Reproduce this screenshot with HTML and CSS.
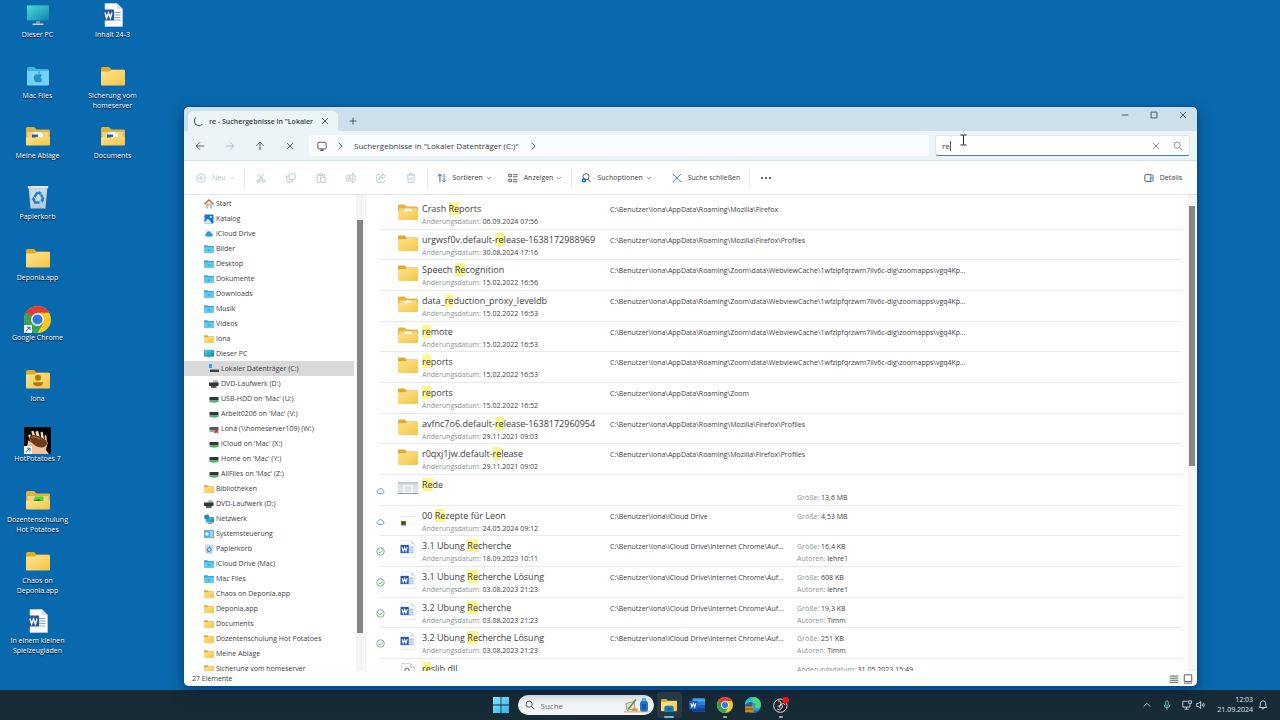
FILE: index.html
```html
<!DOCTYPE html>
<html lang="de">
<head>
  <meta charset="UTF-8">
  <meta name="viewport" content="width=device-width, initial-scale=1.0">
  <title>re - Suchergebnisse in "Lokaler Datenträger (C:)"</title>
  <link rel="stylesheet" href="styles.css">
</head>
<body>

  <!-- Icon sprite -->
  <svg class="sprite" aria-hidden="true">
    <defs>
      <linearGradient id="gFolder" x1="0" y1="0" x2="1" y2="1">
        <stop offset="0" stop-color="#ffe48e"/><stop offset="1" stop-color="#f2c548"/>
      </linearGradient>
      <linearGradient id="gScreen" x1="0" y1="0" x2="1" y2="1">
        <stop offset="0" stop-color="#4fdcd6"/><stop offset="1" stop-color="#0e83b4"/>
      </linearGradient>
      <linearGradient id="gWin" x1="0" y1="0" x2="1" y2="1">
        <stop offset="0" stop-color="#8be6fb"/><stop offset="1" stop-color="#2fb3ee"/>
      </linearGradient>
    </defs>
    <symbol id="folder" viewBox="0 0 24 20">
      <path d="M0 2.5Q0 1 1.500 1H8l2.500 2.500H22.500Q24 3.500 24 5V9H0z" fill="#e0a92e"/>
      <path d="M0 6.500Q0 5.500 1 5.500H8.500L11 4H23q1 0 1 1V18.500Q24 19.500 23 19.500H1Q0 19.500 0 18.500z" fill="url(#gFolder)"/>
    </symbol>
    <symbol id="folder-doc" viewBox="0 0 24 20">
      <path d="M0 2.500Q0 1 1.500 1H8l2.500 2.500H22.500Q24 3.500 24 5V12H0z" fill="#e0b33f"/>
      <path d="M1.500 6H22.500V13H1.500z" fill="#ecd48c"/>
      <path d="M7 6h7l3 2.500v5H7z" fill="#fff"/>
      <path d="M6 8.500h6v4H6z" fill="#34589c"/>
      <path d="M0 11.500H9l2-.8H24V18.500Q24 19.500 23 19.500H1Q0 19.500 0 18.500z" fill="url(#gFolder)"/>
    </symbol>
    <symbol id="folder-open" viewBox="0 0 24 20">
      <path d="M0 2.500Q0 1 1.500 1H8l2.500 2.500H22.500Q24 3.500 24 5V12H0z" fill="#e6b440"/>
      <path d="M1.500 5.500H22.500V13H1.500z" fill="#f0d68c"/>
      <path d="M8 6h7l2 2v4H8z" fill="#fffaf0"/>
      <path d="M0 9.500H9l2-1H24V18.500Q24 19.500 23 19.500H1Q0 19.500 0 18.500z" fill="url(#gFolder)"/>
    </symbol>
    <symbol id="folder-green" viewBox="0 0 24 20">
      <path d="M0 2.500Q0 1 1.500 1H8l2.500 2.500H22.500Q24 3.500 24 5V12H0z" fill="#e0b33f"/>
      <path d="M1.500 6H22.500V13H1.500z" fill="#ecd48c"/>
      <path d="M0 11H9l2-.6H24V18.500Q24 19.500 23 19.500H1Q0 19.500 0 18.500z" fill="url(#gFolder)"/>
      <path d="M9 6.500h8.500v4.500H7.500z" fill="#44dd2c"/><path d="M7 11l6-2 2 2z" fill="#2b7427"/>
    </symbol>
    <symbol id="folder-user" viewBox="0 0 24 20">
      <use href="#folder"/>
      <circle cx="12" cy="8.800" r="3" fill="#ab7a0d"/>
      <path d="M7 13.200h10q0 4-5 4t-5-4z" fill="#ab7a0d"/>
    </symbol>
    <symbol id="folder-blue" viewBox="0 0 24 20">
      <path d="M0 2.500Q0 1 1.500 1H8l2.500 2H22.500Q24 3 24 4.500V9H0z" fill="#34a8d8"/>
      <path d="M0 6H24V18.500Q24 19.500 23 19.500H1Q0 19.500 0 18.500z" fill="#64cbf0"/>
      <path d="M8.500 10h7v5h-7z" fill="#2f98c9" opacity=".5"/>
    </symbol>
    <symbol id="folder-mac" viewBox="0 0 24 20">
      <path d="M1 2.500Q1 1 2.500 1H8l2.500 2H21.500Q23 3 23 4.500V9H1z" fill="#42b2de"/>
      <path d="M1 5H23V18.500Q23 19.500 22 19.500H2Q1 19.500 1 18.500z" fill="#73d3f5"/>
      <path d="M12 8.700c1.200-1 3-.7 3.900.5-1.700 1.100-1.500 3.600.4 4.400-.9 2.400-2 3.400-3.300 2.700-.8-.4-1.200-.3-1.900 0-1.600.7-3.700-2.900-3.300-5.300.3-2.500 2.500-3.400 4.200-2.300zM12 8q0-2.200 2-3 .200 2.300-2 3z" fill="#2492c4"/>
    </symbol>
    <symbol id="pc" viewBox="0 0 24 22">
      <path d="M.5 1h23v16H.5z" fill="#0a6d91"/><path d="M1 1.400h22v15H1z" fill="url(#gScreen)"/>
      <path d="M10 17h4v2.500h-4z" fill="#8194a2"/><path d="M6.500 19.500h11V21h-11z" fill="#c5d1da"/>
    </symbol>
    <symbol id="word" viewBox="0 0 20 24">
      <path d="M2 .5H14L19.500 6v17.500H2z" fill="#fdfdfe" stroke="#ccd3dc" stroke-width=".6"/>
      <path d="M14 .5V6h5.500z" fill="#d5dbe4"/>
      <path d="M11 9.500h6.500M11 12h6.500M11 14.500h6.500M11 17h6.500" stroke="#86a9dc" stroke-width="1.200"/>
      <path d="M0 6.500h11v11H0z" fill="#2857a8"/>
      <path d="M2 9.500l1.600 5.500L5.500 10l1.900 5L9 9.500" fill="none" stroke="#fff" stroke-width="1.400"/>
    </symbol>
    <symbol id="bin" viewBox="0 0 22 24">
      <path d="M1.500 2L20.500 2L18.500 23.500H3.500z" fill="#b9cddb"/><path d="M.8 1h20.400v2.200H.8z" fill="#e1e9ee"/>
      <path d="M3 4h16l-1 9L4 19z" fill="#d1dfe8" opacity=".7"/>
      <path d="M7.500 12l2.500-4 2.500 0M14 9.500l2 4-1.500 2M12.500 17.500H8L6.500 14" fill="none" stroke="#1f83c4" stroke-width="2.400"/>
      <path d="M12 6l3 2-3 2zM17 15l-3.500 0 2 3zM4.500 15l2-3.500 2 3z" fill="#1f83c4"/>
    </symbol>
    <symbol id="chrome" viewBox="0 0 24 24">
      <circle cx="12" cy="12" r="12" fill="#f9c822"/>
      <path d="M12 12L1.610 6A12 12 0 0 0 12 24l5.200-9z" fill="#38a350"/>
      <path d="M1.610 6A12 12 0 0 1 22.390 6H12L6.800 15z" fill="#dc3e32"/>
      <path d="M1.610 6L6.800 15 12 12z" fill="#38a350"/>
      <circle cx="12" cy="12" r="5.700" fill="#fff"/><circle cx="12" cy="12" r="4.500" fill="#3477de"/>
    </symbol>
    <symbol id="shortcut" viewBox="0 0 8 8">
      <path d="M0 0h8v8H0z" fill="#f5f9fc"/><path d="M2 6.200L5.500 2.500M3 2.200h3V5.200" fill="none" stroke="#1d66a8" stroke-width="1"/>
    </symbol>
    <symbol id="potato" viewBox="0 0 26 26">
      <path d="M0 0h26v26H0z" fill="#050505"/>
      <path d="M8 26L3 19 4 13 12 17l6 1 3-4 2 1-2 7 3 4z" fill="#f1c398"/>
      <path d="M7 4l2-.5 3 7-3 1zM11 4.500l2.500-1 2 7-3 .5zM16 5l2-.5 1.500 8-3-1zM20 8l1.500 0 .5 7-2-1zM4 8l2-1 2 5-2 2z" fill="#f7d7b4"/>
      <path d="M5 11q1-4 6-3t9 4 1 6-8 1-8-8z" fill="#6b3c1c"/><path d="M7 10q5-1 9 2" stroke="#a76c3e" fill="none"/>
    </symbol>
    <symbol id="home" viewBox="0 0 10 10">
      <path d="M1.700 4.500h6.600V9.500H6V6.500H4.200v3H1.700z" fill="#b9c3c9"/>
      <path d="M.5 5.300L5 1l4.500 4.300" fill="none" stroke="#cf6a38" stroke-width="1.500"/>
    </symbol>
    <symbol id="gallery" viewBox="0 0 10 10">
      <path d="M.5.5h9v9h-9z" fill="#1975cf"/><path d="M.5 8.500L4 4.500l4 5H.5z" fill="#d8efff"/><circle cx="6.800" cy="3" r="1" fill="#fff"/>
    </symbol>
    <symbol id="icloud" viewBox="0 0 10 10">
      <path d="M.5.5h9v9h-9z" fill="#edf5fa"/><path d="M2.500 7.500a1.700 1.700 0 0 1 0-3.200A2.300 2.300 0 0 1 7 4a1.800 1.800 0 0 1 .5 3.500z" fill="#2e98e4"/>
    </symbol>
    <symbol id="drive" viewBox="0 0 10 10">
      <path d="M0 0h3v4H0z" fill="#35a3e2"/><path d="M1 5h9v3H1z" fill="#3a424a"/><path d="M1 5h9v1H1z" fill="#8b969e"/>
    </symbol>
    <symbol id="dvd" viewBox="0 0 10 10">
      <circle cx="6.500" cy="3.500" r="2.800" fill="#b5bec3"/><path d="M0 3.500h9.500v3.500H0z" fill="#30353a"/><path d="M2 7h5.500v2H2z" fill="#555d63"/>
    </symbol>
    <symbol id="netdrive" viewBox="0 0 10 10">
      <path d="M.5 3h9v3.500h-9z" fill="#30373b"/><path d="M.5 6.500h9V8.200h-9z" fill="#46b36a"/><path d="M3 8.200h4V9.200H3z" fill="#88d09d"/>
    </symbol>
    <symbol id="netoff" viewBox="0 0 10 10">
      <path d="M.5 3h9v3.500h-9z" fill="#555d63"/><path d="M.5 6.500h9V8.200h-9z" fill="#99a1a6"/><path d="M5.500 5.500l3.500 3.500M9 5.500L5.500 9" stroke="#d23a31" stroke-width="1.400"/>
    </symbol>
    <symbol id="network" viewBox="0 0 10 10">
      <path d="M2 3h8v5.500H2z" fill="url(#gScreen)"/><circle cx="2.800" cy="3" r="2.600" fill="#2389b8"/><path d="M4 9h4v1H4z" fill="#788b98"/>
    </symbol>
    <symbol id="control" viewBox="0 0 10 10">
      <path d="M0 1h10v8H0z" fill="#5cb1e2"/><circle cx="3" cy="5" r="1.800" fill="#e6f6ff"/><path d="M6 3h3M6 5h3M6 7h3" stroke="#dff2fd"/>
    </symbol>

    <symbol id="i-left" viewBox="0 0 12 12"><path d="M11 6H1.500M6 1.500L1.500 6 6 10.500"/></symbol>
    <symbol id="i-right" viewBox="0 0 12 12"><path d="M1 6h9.500M6 1.500L10.500 6 6 10.500"/></symbol>
    <symbol id="i-up" viewBox="0 0 12 12"><path d="M6 11V1.500M1.500 6L6 1.500 10.500 6"/></symbol>
    <symbol id="i-x" viewBox="0 0 12 12"><path d="M2.500 2.500l7 7M9.500 2.500l-7 7"/></symbol>
    <symbol id="i-bigx" viewBox="0 0 12 12"><path d="M1 1l10 10M11 1L1 11"/></symbol>
    <symbol id="i-plus" viewBox="0 0 12 12"><path d="M6 2v8M2 6h8"/></symbol>
    <symbol id="i-min" viewBox="0 0 12 12"><path d="M2 6h8"/></symbol>
    <symbol id="i-max" viewBox="0 0 12 12"><path d="M2.500 2.500h7v7h-7z"/></symbol>
    <symbol id="i-chev" viewBox="0 0 12 12"><path d="M4.500 2L8.500 6l-4 4"/></symbol>
    <symbol id="i-down" viewBox="0 0 12 12"><path d="M2 4l4 4 4-4"/></symbol>
    <symbol id="i-caret" viewBox="0 0 12 12"><path d="M2 8L6 4l4 4"/></symbol>
    <symbol id="i-monitor" viewBox="0 0 12 12"><path d="M2 1.500h8q1 0 1 1v6q0 1-1 1H2q-1 0-1-1v-6q0-1 1-1zM4 11.500h4M5 9.500v2M7 9.500v2"/></symbol>
    <symbol id="i-search" viewBox="0 0 12 12"><circle cx="5" cy="5" r="3.700"/><path d="M7.700 7.700L11.200 11.200"/></symbol>
    <symbol id="i-new" viewBox="0 0 12 12"><circle cx="6" cy="6" r="5"/><path d="M6 3.500v5M3.500 6h5"/></symbol>
    <symbol id="i-cut" viewBox="0 0 12 12"><path d="M2.500.8L8 8.500M9.500.8L4 8.500"/><circle cx="3" cy="9.700" r="1.700"/><circle cx="9" cy="9.700" r="1.700"/></symbol>
    <symbol id="i-copy" viewBox="0 0 12 12"><path d="M5 1h5q1 0 1 1v5q0 1-1 1H5Q4 8 4 7V2q0-1 1-1zM4 3.500H2q-1 0-1 1V10q0 1 1 1h4q1.500 0 1.500-1.500V8"/></symbol>
    <symbol id="i-paste" viewBox="0 0 12 12"><path d="M4 2H1.500v9.500H5M8 2h2v2.500M4 1h4v2H4zM5.500 5H11v6.500H5.500z"/></symbol>
    <symbol id="i-rename" viewBox="0 0 12 12"><path d="M7 2.500H2q-1 0-1 1v5q0 1 1 1h5M9.500 2.500H10q1 0 1 1v5q0 1-1 1h-.5M8.200.8v10.400M7 .8h2.500M7 11.200h2.500M2.700 8L4.500 4l1.700 4M3.300 6.800h2.300"/></symbol>
    <symbol id="i-share" viewBox="0 0 12 12"><path d="M5 2H2Q1 2 1 3v7q0 1 1 1h7q1 0 1-1V8.500M8 1l3.200 3L8 7V5.200Q5 5 3.500 8 3.500 3.500 8 2.800z"/></symbol>
    <symbol id="i-trash" viewBox="0 0 12 12"><path d="M1 2.500h10M4.500 2.500V1h3v1.500M2 2.500l.7 9h6.600l.7-9M4.800 5v4M7.200 5v4"/></symbol>
    <symbol id="i-sort" viewBox="0 0 12 12"><path d="M3.500 11V1.500M1 4l2.500-2.500L6 4"/><path class="blue" d="M8.500 1v9.500M6 8l2.500 2.500L11 8"/></symbol>
    <symbol id="i-view" viewBox="0 0 12 12"><path d="M1 1.500h3v3H1zM1 7.500h3v3H1zM6 2h5.500M6 4.500h5.500M6 8h5.500M6 10.500h5.500"/></symbol>
    <symbol id="i-opt" viewBox="0 0 12 12"><circle cx="6" cy="4.500" r="3.700"/><path d="M8.500 7.500l3 3.500"/><circle cx="3.500" cy="8.700" r="2.700" fill="#1767ac" stroke="none"/><circle cx="3.500" cy="8.700" r=".9" fill="#fff" stroke="none"/></symbol>
    <symbol id="i-details" viewBox="0 0 12 12"><path d="M8 2H2Q1 2 1 3v6q0 1 1 1h6"/><path class="blue" d="M8 2h2q1 0 1 1v6q0 1-1 1H8zM9.500 4.500v3"/></symbol>
    <symbol id="i-cloud" viewBox="0 0 12 12"><path d="M3.300 10a2.300 2.300 0 0 1-.2-4.500 3 3 0 0 1 5.800 0A2.300 2.300 0 0 1 8.700 10z"/></symbol>
    <symbol id="i-check" viewBox="0 0 12 12"><circle cx="6" cy="6" r="5"/><path d="M3.500 6.200l1.800 1.800L8.600 4.500"/></symbol>
    <symbol id="i-list" viewBox="0 0 12 12"><path d="M1 2.500h10M1 5h10M1 7.500h10M1 10h10"/></symbol>
    <symbol id="i-tiles" viewBox="0 0 12 12"><path d="M1.500 1h9v8h-9zM1 11h10"/></symbol>
    <symbol id="i-mic" viewBox="0 0 12 12"><path d="M4.500 2.500q0-1.500 1.500-1.500t1.500 1.500v3.500q0 1.500-1.500 1.500T4.500 6zM2.500 5.500q0 3.800 3.500 3.800t3.500-3.800M6 9.300v2.500"/></symbol>
    <symbol id="i-net" viewBox="0 0 12 12"><path d="M7 1.500H1v7h8.500V6M3 11h5M5.300 8.500V11M8 1v3h3.500V1zM9.700 4v2"/></symbol>
    <symbol id="i-sound" viewBox="0 0 12 12"><path d="M.8 4.200h2L5.500 1.800v8.400L2.800 7.800h-2zM7.300 4.500q1 1.500 0 3M8.900 3.200q2 2.800 0 5.600"/></symbol>
    <symbol id="i-bell" viewBox="0 0 12 12"><path d="M1.500 9h9L9.300 7V4.500Q9.300 1 6 1T2.700 4.500V7zM4.700 9.300q0 1.500 1.300 1.500t1.300-1.500"/></symbol>
    <symbol id="i-beam" viewBox="0 0 8 12"><path d="M1 1h2.500l.5.500.5-.5H7M4 1.500v9M1 11h2.500l.5-.5.5.5H7"/></symbol>
  </svg>

  <main class="desktop">
    <div class="desktop-icons">
      <a href="#" class="shortcut"><svg><use href="#pc"/></svg><span>Dieser PC</span></a>
      <a href="#" class="shortcut"><svg><use href="#folder-mac"/></svg><span>Mac Files</span></a>
      <a href="#" class="shortcut"><svg><use href="#folder-doc"/></svg><span>Meine Ablage</span></a>
      <a href="#" class="shortcut"><svg><use href="#bin"/></svg><span>Papierkorb</span></a>
      <a href="#" class="shortcut"><svg><use href="#folder"/></svg><span>Deponia.app</span></a>
      <a href="#" class="shortcut large"><svg><use href="#chrome"/></svg><svg class="arrow"><use href="#shortcut"/></svg><span>Google Chrome</span></a>
      <a href="#" class="shortcut"><svg><use href="#folder-user"/></svg><span>Iona</span></a>
      <a href="#" class="shortcut large"><svg><use href="#potato"/></svg><svg class="arrow"><use href="#shortcut"/></svg><span>HotPotatoes 7</span></a>
      <a href="#" class="shortcut"><svg><use href="#folder-green"/></svg><span>Dozentenschulung<br>Hot Potatoes</span></a>
      <a href="#" class="shortcut"><svg><use href="#folder"/></svg><span>Chaos on<br>Deponia.app</span></a>
      <a href="#" class="shortcut"><svg><use href="#word"/></svg><span>In einem kleinen<br>Spielzeugladen</span></a>
      <a href="#" class="shortcut"><svg><use href="#word"/></svg><span>Inhalt 24-3</span></a>
      <a href="#" class="shortcut"><svg><use href="#folder"/></svg><span>Sicherung vom<br>homeserver</span></a>
      <a href="#" class="shortcut"><svg><use href="#folder-doc"/></svg><span>Documents</span></a>
    </div>

    <section class="window">
      <header class="titlebar">
        <div class="tab">
          <span class="spinner"></span>
          <span class="tab-title">re - Suchergebnisse in "Lokaler</span>
          <button class="icon-btn" aria-label="Tab schließen"><svg class="line"><use href="#i-x"/></svg></button>
        </div>
        <button class="icon-btn new-tab" aria-label="Neuer Tab"><svg class="line"><use href="#i-plus"/></svg></button>
        <div class="window-controls">
          <button class="icon-btn" aria-label="Minimieren"><svg class="line"><use href="#i-min"/></svg></button>
          <button class="icon-btn" aria-label="Maximieren"><svg class="line"><use href="#i-max"/></svg></button>
          <button class="icon-btn" aria-label="Schließen"><svg class="line"><use href="#i-x"/></svg></button>
        </div>
      </header>

      <nav class="address-row">
        <button class="icon-btn" aria-label="Zurück"><svg class="line"><use href="#i-left"/></svg></button>
        <button class="icon-btn" aria-label="Vorwärts" disabled><svg class="line"><use href="#i-right"/></svg></button>
        <button class="icon-btn" aria-label="Nach oben"><svg class="line"><use href="#i-up"/></svg></button>
        <button class="icon-btn" aria-label="Abbrechen"><svg class="line"><use href="#i-x"/></svg></button>
        <div class="breadcrumb">
          <svg class="line"><use href="#i-monitor"/></svg>
          <svg class="line chev"><use href="#i-chev"/></svg>
          <a href="#">Suchergebnisse in "Lokaler Datenträger (C:)"</a>
          <svg class="line chev"><use href="#i-chev"/></svg>
        </div>
        <div class="search">
          <input type="text" value="re" aria-label="Suchen">
          <span class="text-caret"></span>
          <svg class="line pointer"><use href="#i-beam"/></svg>
          <button class="icon-btn" aria-label="Eingabe löschen"><svg class="line"><use href="#i-x"/></svg></button>
          <button class="icon-btn" aria-label="Suche starten"><svg class="line"><use href="#i-search"/></svg></button>
        </div>
      </nav>

      <div class="toolbar">
        <button class="tool" disabled><svg class="line"><use href="#i-new"/></svg>Neu<svg class="line small"><use href="#i-down"/></svg></button>
        <span class="divider"></span>
        <button class="icon-btn" aria-label="Ausschneiden" disabled><svg class="line"><use href="#i-cut"/></svg></button>
        <button class="icon-btn" aria-label="Kopieren" disabled><svg class="line"><use href="#i-copy"/></svg></button>
        <button class="icon-btn" aria-label="Einfügen" disabled><svg class="line"><use href="#i-paste"/></svg></button>
        <button class="icon-btn" aria-label="Umbenennen" disabled><svg class="line"><use href="#i-rename"/></svg></button>
        <button class="icon-btn" aria-label="Freigeben" disabled><svg class="line"><use href="#i-share"/></svg></button>
        <button class="icon-btn" aria-label="Löschen" disabled><svg class="line"><use href="#i-trash"/></svg></button>
        <span class="divider"></span>
        <button class="tool"><svg class="line"><use href="#i-sort"/></svg>Sortieren<svg class="line small"><use href="#i-down"/></svg></button>
        <button class="tool"><svg class="line"><use href="#i-view"/></svg>Anzeigen<svg class="line small"><use href="#i-down"/></svg></button>
        <span class="divider"></span>
        <button class="tool"><svg class="line"><use href="#i-opt"/></svg>Suchoptionen<svg class="line small"><use href="#i-down"/></svg></button>
        <button class="tool close-search"><svg class="line"><use href="#i-bigx"/></svg>Suche schließen</button>
        <span class="divider"></span>
        <button class="icon-btn more" aria-label="Mehr anzeigen"><i></i><i></i><i></i></button>
        <button class="tool details"><svg class="line"><use href="#i-details"/></svg>Details</button>
      </div>

      <div class="content">
        <nav class="sidebar">
          <ul class="tree">
            <li><a href="#"><svg><use href="#home"/></svg>Start</a></li>
            <li><a href="#"><svg><use href="#gallery"/></svg>Katalog</a></li>
            <li><a href="#"><svg><use href="#icloud"/></svg>iCloud Drive</a></li>
            <li><a href="#"><svg><use href="#folder-blue"/></svg>Bilder</a></li>
            <li><a href="#"><svg><use href="#folder-blue"/></svg>Desktop</a></li>
            <li><a href="#"><svg><use href="#folder-blue"/></svg>Dokumente</a></li>
            <li><a href="#"><svg><use href="#folder-blue"/></svg>Downloads</a></li>
            <li><a href="#"><svg><use href="#folder-blue"/></svg>Musik</a></li>
            <li><a href="#"><svg><use href="#folder-blue"/></svg>Videos</a></li>
            <li><a href="#"><svg><use href="#folder"/></svg>Iona</a></li>
            <li><a href="#"><svg><use href="#pc"/></svg>Dieser PC</a></li>
            <li class="sub selected"><a href="#"><svg><use href="#drive"/></svg>Lokaler Datenträger (C:)</a></li>
            <li class="sub"><a href="#"><svg><use href="#dvd"/></svg>DVD-Laufwerk (D:)</a></li>
            <li class="sub"><a href="#"><svg><use href="#netdrive"/></svg>USB-HDD on 'Mac' (U:)</a></li>
            <li class="sub"><a href="#"><svg><use href="#netdrive"/></svg>Arbeit0206 on 'Mac' (V:)</a></li>
            <li class="sub"><a href="#"><svg><use href="#netoff"/></svg>Lona (\\homeserver109) (W:)</a></li>
            <li class="sub"><a href="#"><svg><use href="#netdrive"/></svg>iCloud on 'Mac' (X:)</a></li>
            <li class="sub"><a href="#"><svg><use href="#netdrive"/></svg>Home on 'Mac' (Y:)</a></li>
            <li class="sub"><a href="#"><svg><use href="#netdrive"/></svg>AllFiles on 'Mac' (Z:)</a></li>
            <li><a href="#"><svg><use href="#folder"/></svg>Bibliotheken</a></li>
            <li><a href="#"><svg><use href="#dvd"/></svg>DVD-Laufwerk (D:)</a></li>
            <li><a href="#"><svg><use href="#network"/></svg>Netzwerk</a></li>
            <li><a href="#"><svg><use href="#control"/></svg>Systemsteuerung</a></li>
            <li><a href="#"><svg><use href="#bin"/></svg>Papierkorb</a></li>
            <li><a href="#"><svg><use href="#folder-blue"/></svg>iCloud Drive (Mac)</a></li>
            <li><a href="#"><svg><use href="#folder-blue"/></svg>Mac Files</a></li>
            <li><a href="#"><svg><use href="#folder"/></svg>Chaos on Deponia.app</a></li>
            <li><a href="#"><svg><use href="#folder"/></svg>Deponia.app</a></li>
            <li><a href="#"><svg><use href="#folder"/></svg>Documents</a></li>
            <li><a href="#"><svg><use href="#folder"/></svg>Dozentenschulung Hot Potatoes</a></li>
            <li><a href="#"><svg><use href="#folder"/></svg>Meine Ablage</a></li>
            <li><a href="#"><svg><use href="#folder"/></svg>Sicherung vom homeserver</a></li>
          </ul>
          <div class="scrollbar"><div class="thumb"></div></div>
        </nav>

        <ul class="results">
          <li class="result">
            <svg class="file-icon"><use href="#folder-open"/></svg>
            <div class="name"><h3>Crash <mark>Re</mark>ports</h3><p><span>Änderungsdatum:</span> 06.09.2024 07:56</p></div>
            <p class="path wide">C:\Benutzer\Iona\AppData\Roaming\Mozilla\Firefox</p>
          </li>
          <li class="result">
            <svg class="file-icon"><use href="#folder"/></svg>
            <div class="name"><h3>urgwsf0v.default-<mark>re</mark>lease-1638172988969</h3><p><span>Änderungsdatum:</span> 30.08.2024 17:16</p></div>
            <p class="path wide">C:\Benutzer\Iona\AppData\Roaming\Mozilla\Firefox\Profiles</p>
          </li>
          <li class="result">
            <svg class="file-icon"><use href="#folder"/></svg>
            <div class="name"><h3>Speech <mark>Re</mark>cognition</h3><p><span>Änderungsdatum:</span> 15.02.2022 16:56</p></div>
            <p class="path wide">C:\Benutzer\Iona\AppData\Roaming\Zoom\data\WebviewCache\1wfzlpfqrzwm7ilv6c-dig\zoomapps\vgq4Kp...</p>
          </li>
          <li class="result">
            <svg class="file-icon"><use href="#folder-open"/></svg>
            <div class="name"><h3>data_<mark>re</mark>duction_proxy_leveldb</h3><p><span>Änderungsdatum:</span> 15.02.2022 16:53</p></div>
            <p class="path wide">C:\Benutzer\Iona\AppData\Roaming\Zoom\data\WebviewCache\1wfzlpfqrzwm7ilv6c-dig\zoomapps\vgq4Kp...</p>
          </li>
          <li class="result">
            <svg class="file-icon"><use href="#folder-open"/></svg>
            <div class="name"><h3><mark>re</mark>mote</h3><p><span>Änderungsdatum:</span> 15.02.2022 16:53</p></div>
            <p class="path wide">C:\Benutzer\Iona\AppData\Roaming\Zoom\data\WebviewCache\1wfzlpfqrzwm7ilv6c-dig\zoomapps\vgq4Kp...</p>
          </li>
          <li class="result">
            <svg class="file-icon"><use href="#folder"/></svg>
            <div class="name"><h3><mark>re</mark>ports</h3><p><span>Änderungsdatum:</span> 15.02.2022 16:53</p></div>
            <p class="path wide">C:\Benutzer\Iona\AppData\Roaming\Zoom\data\WebviewCache\1wfzlpfqrzwm7ilv6c-dig\zoomapps\vgq4Kp...</p>
          </li>
          <li class="result">
            <svg class="file-icon"><use href="#folder"/></svg>
            <div class="name"><h3><mark>re</mark>ports</h3><p><span>Änderungsdatum:</span> 15.02.2022 16:52</p></div>
            <p class="path wide">C:\Benutzer\Iona\AppData\Roaming\Zoom</p>
          </li>
          <li class="result">
            <svg class="file-icon"><use href="#folder"/></svg>
            <div class="name"><h3>avfnc7o6.default-<mark>re</mark>lease-1638172960954</h3><p><span>Änderungsdatum:</span> 29.11.2021 09:03</p></div>
            <p class="path wide">C:\Benutzer\Iona\AppData\Roaming\Mozilla\Firefox\Profiles</p>
          </li>
          <li class="result">
            <svg class="file-icon"><use href="#folder"/></svg>
            <div class="name"><h3>r0qxj1jw.default-<mark>re</mark>lease</h3><p><span>Änderungsdatum:</span> 29.11.2021 09:02</p></div>
            <p class="path wide">C:\Benutzer\Iona\AppData\Roaming\Mozilla\Firefox\Profiles</p>
          </li>
          <li class="result">
            <svg class="line sync"><use href="#i-cloud"/></svg>
            <svg class="file-icon" viewBox="0 0 20 12"><path d="M0 0h20v12H0z" fill="#dde2e4"/><path d="M0 0h20v2H0z" fill="#c2cbd0"/><path d="M5 3.500h10V11H5z" fill="#f8fafa"/><path d="M6.500 5h7M6.500 7h7M6.500 9h7" stroke="#b0b7ba" stroke-width=".7"/><path d="M0 11.500h20" stroke="#8ba0ae"/></svg>
            <div class="name"><h3><mark>Re</mark>de</h3></div>
            <div class="info"><p>&nbsp;</p><p><span>Größe:</span> 13,6 MB</p></div>
          </li>
          <li class="result">
            <svg class="line sync"><use href="#i-cloud"/></svg>
            <svg class="file-icon" viewBox="0 0 20 16"><path d="M2 0h15v15H2z" fill="#fcfcfb"/><path d="M2 5.500h15" stroke="#dedede" stroke-width=".8"/><path d="M3 10h5v4.500H3z" fill="#697143"/><path d="M4 11h3v2H4z" fill="#3d4821"/></svg>
            <div class="name"><h3>00 <mark>Re</mark>zepte für Leon</h3><p><span>Änderungsdatum:</span> 24.05.2024 09:12</p></div>
            <p class="path">C:\Benutzer\Iona\iCloud Drive</p>
            <div class="info"><p><span>Größe:</span> 4,53 MB</p></div>
          </li>
          <li class="result">
            <svg class="line sync done"><use href="#i-check"/></svg>
            <svg class="file-icon"><use href="#word"/></svg>
            <div class="name"><h3>3.1 Ubung <mark>Re</mark>cherche</h3><p><span>Änderungsdatum:</span> 18.09.2023 10:11</p></div>
            <p class="path">C:\Benutzer\Iona\iCloud Drive\Internet Chrome\Auf...</p>
            <div class="info"><p><span>Größe:</span> 16,4 KB</p><p><span>Autoren:</span> lehre1</p></div>
          </li>
          <li class="result">
            <svg class="line sync done"><use href="#i-check"/></svg>
            <svg class="file-icon"><use href="#word"/></svg>
            <div class="name"><h3>3.1 Ubung <mark>Re</mark>cherche Lösung</h3><p><span>Änderungsdatum:</span> 03.08.2023 21:23</p></div>
            <p class="path">C:\Benutzer\Iona\iCloud Drive\Internet Chrome\Auf...</p>
            <div class="info"><p><span>Größe:</span> 608 KB</p><p><span>Autoren:</span> lehre1</p></div>
          </li>
          <li class="result">
            <svg class="line sync done"><use href="#i-check"/></svg>
            <svg class="file-icon"><use href="#word"/></svg>
            <div class="name"><h3>3.2 Ubung <mark>Re</mark>cherche</h3><p><span>Änderungsdatum:</span> 03.08.2023 21:23</p></div>
            <p class="path">C:\Benutzer\Iona\iCloud Drive\Internet Chrome\Auf...</p>
            <div class="info"><p><span>Größe:</span> 19,3 KB</p><p><span>Autoren:</span> Timm</p></div>
          </li>
          <li class="result">
            <svg class="line sync done"><use href="#i-check"/></svg>
            <svg class="file-icon"><use href="#word"/></svg>
            <div class="name"><h3>3.2 Ubung <mark>Re</mark>cherche Lösung</h3><p><span>Änderungsdatum:</span> 03.08.2023 21:23</p></div>
            <p class="path">C:\Benutzer\Iona\iCloud Drive\Internet Chrome\Auf...</p>
            <div class="info"><p><span>Größe:</span> 251 KB</p><p><span>Autoren:</span> Timm</p></div>
          </li>
          <li class="result">
            <svg class="file-icon" viewBox="0 0 20 20"><path d="M3 .5h9.500L17 5v14.500H3z" fill="#fff" stroke="#cfcfcf"/><path d="M12.500.5V5H17" fill="none" stroke="#bbb"/><circle cx="9" cy="8" r="2.200" fill="none" stroke="#8b9297" stroke-width="1.500"/></svg>
            <div class="name"><h3><mark>re</mark>slib.dll</h3></div>
            <div class="info"><p><span>Änderungsdatum:</span> 31.05.2023 15:49</p></div>
          </li>
        </ul>
        <div class="scrollbar main-scroll"><div class="thumb"></div></div>
      </div>

      <footer class="statusbar">
        <span>27 Elemente</span>
        <button class="icon-btn" aria-label="Listenansicht"><svg class="line"><use href="#i-list"/></svg></button>
        <button class="icon-btn" aria-label="Kachelansicht"><svg class="line"><use href="#i-tiles"/></svg></button>
      </footer>
    </section>
  </main>

  <footer class="taskbar">
    <div class="apps">
      <button class="app start" aria-label="Start"><svg viewBox="0 0 20 20"><path d="M0 0h9.500v9.500H0zM10.500 0H20v9.500h-9.500zM0 10.500h9.500V20H0zM10.500 10.500H20V20h-9.500z" fill="url(#gWin)"/></svg></button>
      <div class="task-search">
        <svg class="line"><use href="#i-search"/></svg>
        <input type="text" placeholder="Suche" aria-label="Suche">
        <svg class="art" viewBox="0 0 26 14"><path d="M0 12.500h26v1.500H0z" fill="#dfbf8f"/><path d="M2 5l8-2 1 7-8 2z" fill="#e9e3d0" stroke="#9aa37a"/><path d="M4 11L12 1" stroke="#5d9a45" stroke-width="1.500"/><path d="M9 10h5v2.500H7z" fill="#d9984f"/><path d="M16 5q0-2 2-3V0h4v2q2 1 2 3v6q0 2-2 2h-4q-2 0-2-2z" fill="#1f78cd"/><path d="M18 0h4v2.500h-4z" fill="#53b8ee"/><path d="M18 5q2 2 4 0v6h-4z" fill="#1656a3"/></svg>
      </div>
      <button class="app active" aria-label="Explorer"><svg viewBox="0 0 24 20"><use href="#folder"/><path d="M5 20v-6q0-3 3-3h8q3 0 3 3v6z" fill="#1a7fc0"/><path d="M8 15h8v2H8z" fill="#0b5e9a"/></svg></button>
      <button class="app" aria-label="Word"><svg viewBox="0 0 22 20"><path d="M5 1h17v18H5z" fill="#2b7cd3"/><path d="M5 1h17v4.500H5z" fill="#41a5ee"/><path d="M5 10h17v4.500H5z" fill="#185abd"/><path d="M5 14.500h17V19H5z" fill="#103f91"/><path d="M0 4.500h12v11.500H0z" fill="#185abd"/><path d="M2.500 7.500l1.600 5.500L6 8l1.900 5 1.600-5.500" fill="none" stroke="#fff" stroke-width="1.400"/></svg></button>
      <button class="app running" aria-label="Chrome"><svg><use href="#chrome"/></svg></button>
      <button class="app" aria-label="Edge"><svg viewBox="0 0 24 24"><circle cx="12" cy="12" r="12" fill="#1f9bd7"/><path d="M0 12A12 12 0 0 1 24 12q0 5-5 5-4 0-4-2 2-2 0-5Q8 4 0 12z" fill="#50d47c"/><path d="M0 12A12 12 0 0 1 12 0q-2 4 0 6Q5 5 0 12z" fill="#2fb4d6"/><path d="M0 12Q6 5 12 9q-4 3-2 8 3 6 11 3A12 12 0 0 1 0 12z" fill="#1868b4"/><path d="M0 14h13v9H0z" fill="#c98727"/><path d="M4 14v-2h5v2M0 18h13" fill="none" stroke="#714511" stroke-width="1.300"/></svg></button>
      <button class="app running" aria-label="OBS"><svg viewBox="0 0 24 24"><circle cx="11" cy="13" r="10" fill="#23252b" stroke="#d6dbe0" stroke-width="1.500"/><path d="M7 6q5-1 5 4t-5 4M18 12q-2-4-6-1t-1 6M6 18q4 3 7-1t-1-6" fill="none" stroke="#d6dbe0" stroke-width="1.500"/><circle cx="19" cy="5" r="5" fill="#f31416"/></svg></button>
    </div>
    <div class="tray">
      <button class="icon-btn" aria-label="Ausgeblendete Symbole"><svg class="line"><use href="#i-caret"/></svg></button>
      <button class="icon-btn mic" aria-label="Mikrofon"><svg class="line"><use href="#i-mic"/></svg></button>
      <button class="tray-group" aria-label="Netzwerk und Ton"><svg class="line"><use href="#i-net"/></svg><svg class="line"><use href="#i-sound"/></svg></button>
      <button class="clock"><time>12:03</time><time>21.09.2024</time></button>
      <button class="icon-btn bell" aria-label="Benachrichtigungen"><svg class="line"><use href="#i-bell"/></svg></button>
    </div>
  </footer>

</body>
</html>
```

FILE: styles.css
```css
* {
  box-sizing: border-box;
}

body {
  margin: 0;
  height: 100vh;
  display: flex;
  flex-direction: column;
  overflow: hidden;
  font-family: "Open Sans", "Noto Sans", sans-serif;
  font-size: 8px;
  color: #3c4043;
}

h3,
p,
ul {
  margin: 0;
  padding: 0;
  font-weight: normal;
  list-style: none;
}

a {
  color: inherit;
  text-decoration: none;
}

button,
input {
  font: inherit;
  color: inherit;
  background: none;
  border: none;
  padding: 0;
  outline: none;
}

svg {
  display: block;
  flex-shrink: 0;
}

.sprite {
  position: absolute;
  width: 0;
  height: 0;
}

.line {
  width: 10px;
  height: 10px;
  fill: none;
  stroke: currentColor;
  stroke-width: 1;
}

.line.small {
  width: 6px;
  height: 6px;
  margin-left: -3px;
}

.blue {
  stroke: #2273b5;
}

.icon-btn {
  display: flex;
  align-items: center;
  justify-content: center;
  width: 30px;
  height: 20px;
}

/* Desktop */
.desktop {
  flex: 1;
  min-height: 0;
  position: relative;
  background: #0869ae;
}

.desktop-icons {
  height: 100%;
  display: grid;
  grid-auto-flow: column;
  grid-template-rows: repeat(11, 1fr);
  grid-auto-columns: 75px;
  padding-bottom: 23px;
}

.shortcut {
  position: relative;
  display: flex;
  flex-direction: column;
  align-items: center;
  padding-top: 3px;
  min-height: 0;
  color: #fff;
  text-align: center;
  font-size: 7px;
  line-height: 10px;
  text-shadow: 0 1px 1px #000;
}

.shortcut svg {
  width: 24px;
  height: 24px;
  margin-bottom: 3px;
}

.shortcut.large svg {
  width: 27px;
  height: 27px;
  margin-bottom: 0;
}

.shortcut.large .arrow {
  position: absolute;
  top: 22px;
  left: 24px;
  width: 8px;
  height: 8px;
}

/* Explorer window */
.window {
  position: absolute;
  top: 107px;
  right: 83px;
  bottom: 4px;
  left: 184px;
  display: flex;
  flex-direction: column;
  overflow: hidden;
  background: #fff;
  border-radius: 5px;
  box-shadow: 0 0 1px 1px #07508a, 0 5px 14px rgba(0, 20, 50, 0.5);
}

.titlebar {
  display: flex;
  height: 24px;
  padding-left: 4px;
  background: #ccdfea;
}

.tab {
  display: flex;
  align-items: center;
  width: 150px;
  height: 20px;
  margin-top: 4px;
  padding-left: 6px;
  background: #ebf4f7;
  border-radius: 5px 5px 0 0;
}

.spinner {
  width: 10px;
  height: 10px;
  border: 1px solid transparent;
  border-bottom-color: #2d4656;
  border-left-color: #2d4656;
  border-radius: 50%;
}

.tab-title {
  width: 105px;
  margin-left: 5px;
  white-space: nowrap;
  font-size: 7px;
  font-weight: 600;
}

.tab .icon-btn {
  width: 22px;
}

.new-tab {
  height: 24px;
  padding-top: 4px;
}

.window-controls {
  display: flex;
  height: 16px;
  margin-left: auto;
}

.window-controls .icon-btn {
  width: 29px;
  height: 16px;
}

.address-row {
  display: flex;
  align-items: center;
  height: 30px;
  padding: 0 7px 0 1px;
  background: #ebf4f7;
  border-bottom: 1px solid #d5e2e7;
}

.address-row :disabled {
  color: #a9b4ba;
}

.breadcrumb {
  flex: 1;
  display: flex;
  align-items: center;
  height: 21px;
  margin-left: 4px;
  padding-left: 8px;
  background: #f8fcfd;
  border-radius: 3px;
}

.breadcrumb a {
  margin: 0 9px;
}

.breadcrumb .chev:nth-child(2) {
  margin-left: 8px;
}

.search {
  position: relative;
  display: flex;
  align-items: center;
  width: 255px;
  height: 21px;
  margin-left: 6px;
  padding-left: 6px;
  background: #fff;
  border: 1px solid #e1e8eb;
  border-bottom: 1px solid #4481a9;
  border-radius: 3px;
}

.search input {
  flex: 1;
  min-width: 0;
}

.search .icon-btn {
  width: 22px;
  color: #757c80;
}

.text-caret {
  position: absolute;
  top: 5px;
  left: 14px;
  width: 1px;
  height: 10px;
  background: #555;
}

.search .pointer {
  position: absolute;
  top: -2px;
  left: 23px;
  width: 9px;
  height: 12px;
  color: #222;
}

/* Command bar */
.toolbar {
  display: flex;
  align-items: center;
  height: 34px;
  padding: 0 7px 0 4px;
  border-bottom: 1px solid #e0e7ea;
  font-size: 7px;
}

.tool {
  display: flex;
  align-items: center;
  gap: 6px;
  height: 20px;
  padding: 0 8px;
}

.toolbar :disabled {
  color: #b1bec5;
}

.divider {
  width: 1px;
  height: 20px;
  margin: 0 1px;
  background: #e8edef;
}

.close-search {
  margin-left: 4px;
}

.close-search svg {
  color: #2273b5;
}

.more {
  gap: 2px;
}

.more i {
  width: 2px;
  height: 2px;
  background: #333;
  border-radius: 50%;
}

.details {
  margin-left: auto;
}

/* Folder tree */
.content {
  flex: 1;
  min-height: 0;
  display: flex;
  overflow: hidden;
}

.sidebar {
  width: 182px;
  display: flex;
  border-right: 1px solid #f0f3f4;
}

.tree {
  flex: 1;
  padding-top: 1px;
  font-size: 7px;
}

.tree a {
  display: flex;
  align-items: center;
  gap: 2px;
  height: 15px;
  padding-left: 20px;
  white-space: nowrap;
}

.tree svg {
  width: 10px;
  height: 10px;
}

.tree .sub a {
  padding-left: 25px;
}

.tree .selected {
  background: #d9d9d9;
}

.scrollbar {
  width: 8px;
  margin: 0 1px 0 2px;
  padding: 25px 1px 38px;
  background: #f4f4f4;
}

.thumb {
  height: 100%;
  background: #858585;
}

.main-scroll {
  margin: 0 1px 0 7px;
  padding: 11px 1px 0;
}

.main-scroll .thumb {
  height: 56%;
}

/* Search results */
.results {
  flex: 1;
  min-width: 0;
  padding: 4px 0 0 14px;
  font-size: 7px;
}

.result {
  display: grid;
  grid-template-columns: 18px 24px 188fr 187fr 187fr 197fr;
  height: 31px;
  padding-top: 4px;
  border-bottom: 1px solid #e6eaec;
  line-height: 12px;
  white-space: nowrap;
}

.result:nth-child(3n + 2) {
  height: 30px;
}

.sync {
  grid-column: 1;
  grid-row: 1;
  width: 9px;
  height: 9px;
  margin: 7px 0 0 -4px;
  color: #4a8bbd;
}

.sync.done {
  color: #45a35b;
}

.file-icon {
  grid-column: 2;
  grid-row: 1;
  width: 20px;
  height: 18px;
}

.name {
  grid-column: 3;
}

.name h3 {
  font-size: 9px;
}

.name p,
.path,
.info {
  margin-top: 1px;
}

.name span,
.info span {
  color: #8b9297;
}

mark {
  background: #fdf68f;
  color: inherit;
}

.path {
  grid-column: 4;
  overflow: hidden;
  text-overflow: ellipsis;
}

.path.wide {
  grid-column: 4 / span 2;
}

.info {
  grid-column: 5;
}

.statusbar {
  display: flex;
  align-items: center;
  height: 15px;
  padding: 0 2px 0 8px;
  font-size: 7px;
  background: #fff;
}

.statusbar span {
  flex: 1;
}

.statusbar .icon-btn {
  width: 14px;
  height: 15px;
}

/* Taskbar */
.taskbar {
  display: grid;
  grid-template-columns: 1fr auto 1fr;
  align-items: center;
  height: 30px;
  background: #172b37;
  color: #dfe8ec;
}

.apps {
  grid-column: 2;
  display: flex;
  align-items: center;
  gap: 3px;
}

.app {
  position: relative;
  width: 25px;
  height: 26px;
  display: flex;
  align-items: center;
  justify-content: center;
  border-radius: 3px;
}

.app svg {
  width: 16px;
  height: 16px;
}

.app.start {
  width: 28px;
}

.app.active {
  background: #263944;
}

.app.active::after,
.app.running::after {
  content: "";
  position: absolute;
  bottom: 0;
  width: 4px;
  height: 2px;
  border-radius: 1px;
  background: #a3adb3;
}

.app.active::after {
  width: 10px;
  background: #5cc2f2;
}

.task-search {
  display: flex;
  align-items: center;
  gap: 6px;
  width: 136px;
  height: 20px;
  padding: 0 4px 0 7px;
  background: #f2f4f5;
  border-radius: 10px;
  color: #2f3940;
}

.task-search input {
  flex: 1;
  min-width: 0;
}

.task-search input::placeholder {
  color: #687178;
  opacity: 1;
}

.task-search .art {
  width: 26px;
  height: 15px;
}

.tray {
  display: flex;
  align-items: center;
  justify-content: flex-end;
  padding-right: 8px;
}

.tray .icon-btn {
  width: 20px;
}

.tray .mic {
  color: #7fd0cf;
}

.tray-group {
  display: flex;
  gap: 4px;
  margin: 0 5px;
}

.clock {
  display: flex;
  flex-direction: column;
  align-items: flex-end;
  margin-left: 6px;
  font-size: 7px;
  line-height: 10px;
}

.tray .bell {
  width: 19px;
}
```
